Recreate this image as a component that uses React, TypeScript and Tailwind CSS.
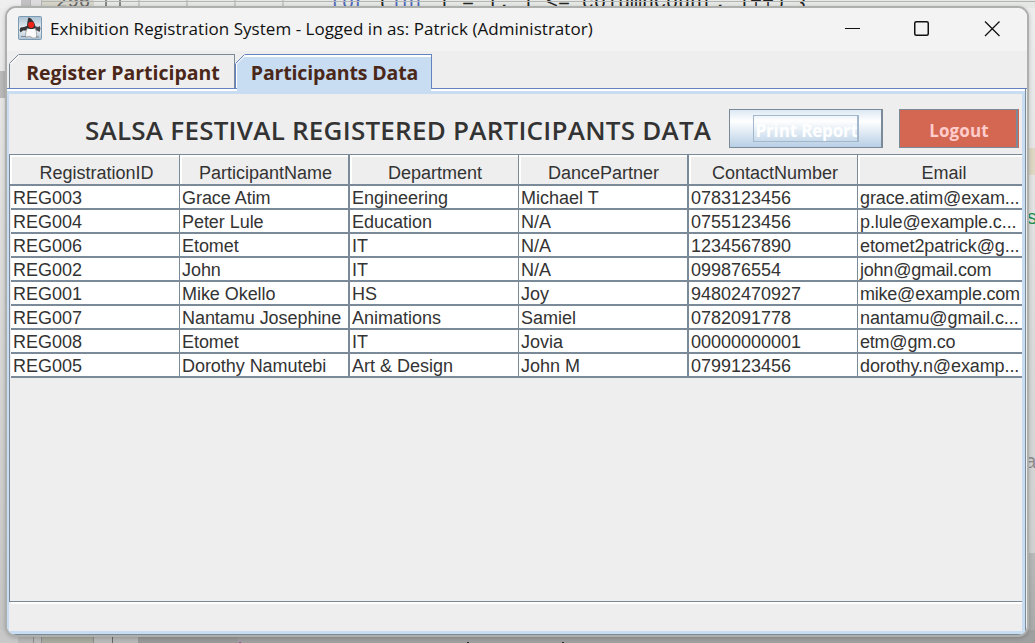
import React from "react";

const columns = [
  "RegistrationID",
  "ParticipantName",
  "Department",
  "DancePartner",
  "ContactNumber",
  "Email",
];

const cellStyles = [
  "w-[170px] border-r pl-[4px]",
  "w-[170px] border-r-2 pl-[2px] tracking-[-0.05px]",
  "w-[169px] border-r pl-[2px]",
  "w-[170px] border-r-2 pl-[2px]",
  "w-[169px] border-r pl-[2px]",
  "w-[164px] pl-[2px]",
];

const headerInsets = ["pl-[4px]", "pl-[3px]", "pl-[2px]", "pl-px", "pl-[4px]", "pl-[8px]"];

const rows = [
  ["REG003", "Grace Atim", "Engineering", "Michael T", "0783123456", "grace.atim@exam..."],
  ["REG004", "Peter Lule", "Education", "N/A", "0755123456", "p.lule@example.c..."],
  ["REG006", "Etomet", "IT", "N/A", "1234567890", "etomet2patrick@g..."],
  ["REG002", "John", "IT", "N/A", "099876554", "john@gmail.com"],
  ["REG001", "Mike Okello", "HS", "Joy", "94802470927", "mike@example.com"],
  ["REG007", "Nantamu Josephine", "Animations", "Samiel", "0782091778", "nantamu@gmail.c..."],
  ["REG008", "Etomet", "IT", "Jovia", "00000000001", "etm@gm.co"],
  ["REG005", "Dorothy Namutebi", "Art & Design", "John M", "0799123456", "dorothy.n@examp..."],
];

const emailTracking = (value: string) => (value.endsWith("...") ? "tracking-[-0.1px]" : "tracking-[-0.22px]");

function JavaIcon() {
  return (
    <svg width="24" height="24" viewBox="0 0 24 24" className="relative -top-[2px] shrink-0">
      <defs>
        <linearGradient id="duke-bg" x1="0" y1="0" x2="0" y2="1">
          <stop offset="0" stopColor="#a9bfd0" />
          <stop offset="0.55" stopColor="#eef2f6" />
          <stop offset="1" stopColor="#aec0d0" />
        </linearGradient>
      </defs>
      <rect x="0.5" y="0.5" width="23" height="23" rx="1" fill="url(#duke-bg)" stroke="#7b9ab3" />
      <path d="M10 9.500 L6 11 L2.500 11.500 L1.500 14 L2.500 16.500 L5 14.500 L10 14.500 Z" fill="#35373a" />
      <path d="M16 10 L20 11 L22 10 L22.500 13 L21.500 16 L19 14.500 L16 14 Z" fill="#45474b" />
      <path d="M9.500 12 C8 15 7 18.500 8 21.500 C10 20 11.500 20 13 21 C15 22.500 17 22.500 18.500 21 C19 17 18 14 17 12 Z" fill="#fafafa" stroke="#909090" strokeWidth="0.7" />
      <path d="M10.500 1.500 C13 2 16 5 17.500 10.500 L16.500 12.500 C13 13.500 11 13 9 12 C9 8 9.500 4 10.500 1.500 Z" fill="#303236" />
      <circle cx="13.200" cy="8.800" r="3.100" fill="#ee241b" />
      <path d="M3 20.500 H8 M18 21 H21" stroke="#798895" strokeWidth="1" />
    </svg>
  );
}

function TabCorner({ color, fill }: { color: string; fill: string }) {
  return (
    <svg width="10" height="10" viewBox="0 0 10 10" className="absolute -left-px -top-px">
      <path d="M0 0 H10 V1 L1 10 H0 Z" fill="#eeeeee" />
      <path d="M10 2 L10 10 H1 Z" fill={fill} />
      <path d="M0.500 9.500 L9.500 0.500" stroke={color} fill="none" />
      <path d="M1.500 10 L10 1.500" stroke="#ffffff" fill="none" />
    </svg>
  );
}

function Backdrop() {
  return (
    <div className="absolute inset-0 flex flex-col bg-[#a0a0a0] font-['Liberation_Mono',monospace]">
      <div className="relative flex h-[8px] shrink-0 overflow-hidden bg-[#e6e8e5]">
        <div className="w-[21px] bg-[#eeeeee]" />
        <div className="w-[9px] bg-[#c2c2c2]" />
        <div className="w-[12px] border-x border-[#b4b4b4] bg-[#dcdcdc]" />
        <div className="w-[52px] bg-[#d4d4c9] pl-[14px] text-[19px] leading-[8px] text-[#666]">
          <span className="relative -top-[2px]">296</span>
        </div>
        <div className="ml-[11px] h-[8px] w-[16px] border-2 border-t-0 border-[#888]" />
        <div className="ml-[17px] w-[2px] bg-[#c8cac7]" />
        <div className="ml-[46px] w-[2px] bg-[#c8cac7]" />
        <div className="ml-[46px] w-[2px] bg-[#c8cac7]" />
        <div className="ml-[46px] w-[2px] bg-[#c8cac7]" />
        <div className="absolute left-[330px] -top-[7px] whitespace-pre text-[20px] leading-[20px] text-[#222]">
          <span className="text-[#4d68bd]">for</span> (<span className="text-[#4d68bd]">int</span> i = 1; i &lt;= columnCount; i++) {"{"}
        </div>
        <div className="absolute left-[42px] top-[1px] h-px w-[993px] bg-[#b5b6b4]" />
      </div>
      <div className="flex min-h-0 flex-1 justify-between">
        <div className="w-[18px] bg-gradient-to-b from-[#ececec] to-[#c6c6c6] pt-[63px]">
          <div className="h-[27px] bg-[#b9b9b9]" />
        </div>
        <div className="flex w-[18px] flex-col bg-gradient-to-b from-[#ededed] via-[#dcdcdc] to-[#cdcdcd] pt-[140px] text-[20px]">
          <div className="h-[27px] shrink-0 bg-[#ded7c4]" />
          <div className="mt-[32px] h-[24px] shrink-0 pl-[9px] leading-[24px] text-[#1d914f]">s</div>
          <div className="mt-[220px] h-[24px] shrink-0 pl-[8px] leading-[24px] text-[#8d8d8d]">a</div>
          <div className="mt-[78px] flex-1 bg-gradient-to-b from-[#b9b9b9] to-[#aaaaaa]" />
        </div>
      </div>
      <div className="flex h-[13px] shrink-0 overflow-hidden bg-[#9f9f9f]">
        <div className="w-[18px] bg-[#c8c8c8]" />
        <div className="w-[15px] bg-[#b7b7b7]" />
        <div className="w-[9px] border-x border-[#8c8c8c] bg-[#b9b9b9]" />
        <div className="w-[52px] border-r border-[#8c8c8c] bg-[#a9aa9f]" />
        <div className="w-[19px] border-r border-[#666] bg-[#bababa]" />
        <div className="w-[25px] bg-[#b7b7b7]" />
        <div className="w-[100px] bg-[#999999]" />
        <div className="mt-[12px] ml-px h-px w-[2px] bg-[#a44d9b]" />
        <div className="mt-[12px] ml-[226px] h-px w-[2px] bg-[#28283c]" />
        <div className="mt-[12px] ml-[93px] h-px w-[2px] bg-[#28283c]" />
      </div>
    </div>
  );
}

function TitleBar() {
  return (
    <div className="flex h-[43px] shrink-0 items-center bg-[#f3f3f3] pl-[11px]">
      <JavaIcon />
      <div className="ml-[8px] flex-1 whitespace-nowrap pb-px font-['Open_Sans',sans-serif] text-[17px] leading-[24px] tracking-[0.04px] text-[#111]">
        <span>Exhibition Registration System - Logged in as: Patrick (Administrator)</span>
      </div>
      <svg width="182" height="43" viewBox="845 8 182 43" fill="none" stroke="#111" className="shrink-0">
        <path d="M845 28.500 H860" />
        <rect x="914.750" y="21.750" width="13.500" height="13.500" rx="1.500" strokeWidth="1.500" />
        <path d="M985 21.500 L999.500 36 M999.500 21.500 L985 36" strokeWidth="1.300" />
      </svg>
    </div>
  );
}

function Tabs() {
  return (
    <div className="flex h-[37px] shrink-0 bg-[#eeeeee] pl-[2px] pt-[3px] font-['Open_Sans',sans-serif] text-[19.500px] font-bold text-[#4a2718]">
      <div className="relative flex h-[34px] w-[226px] items-center justify-center border border-b-0 border-[#7a8a99] whitespace-nowrap">
        <TabCorner color="#7a8a99" fill="#eeeeee" />
        <span className="relative left-px top-px">Register Participant</span>
      </div>
      <div className="relative z-10 h-[37px] w-[197px]">
        <div className="relative flex h-[34px] items-center justify-center border border-b-0 border-[#6382bf] bg-[#c8ddf2] shadow-[inset_1px_2px_0_#fff] whitespace-nowrap">
          <TabCorner color="#6382bf" fill="#c8ddf2" />
          <span className="relative left-px top-px tracking-[-0.15px]">Participants Data</span>
        </div>
        <div className="ml-[2px] h-[3px] w-[194px] bg-[#c8ddf2]" />
      </div>
    </div>
  );
}

function Toolbar() {
  return (
    <div className="flex h-[60px] shrink-0 pl-[76px] pt-[15px] font-['Open_Sans',sans-serif]">
      <h1 className="w-[644px] whitespace-nowrap pt-px text-[26px] font-semibold leading-[40px] tracking-[0.24px] text-[#333]">
        SALSA FESTIVAL REGISTERED PARTICIPANTS DATA
      </h1>
      <button className="flex h-[39px] w-[154px] items-center justify-center border border-r-2 border-[#7a8a99] bg-gradient-to-b from-[#dce8f3] via-[#ffffff] via-30% to-[#b8cfe5]">
        <span className="flex h-[27px] w-[106px] items-center overflow-hidden whitespace-nowrap border border-r-2 border-[#a3b8cc] pl-[2px] pt-[4px] text-[17px] font-bold tracking-[-0.15px] text-white">
          Print Report
        </span>
      </button>
      <button className="ml-[16px] flex h-[39px] w-[120px] bg-[#d46752] pr-px">
        <span className="flex h-full w-full items-center justify-center border border-r-2 border-[#7a8a99] pl-[2px] pt-[4px] text-[17px] font-bold tracking-[0.1px] text-[#ffcccc]">
          Logout
        </span>
      </button>
    </div>
  );
}

function ParticipantsTable() {
  return (
    <div className="flex h-[448px] shrink-0 flex-col border-b border-l border-t border-[#7a8a99] font-['Liberation_Sans',Arial,sans-serif] text-[18px] text-[#333]">
      <div className="flex h-[31px] w-[1012px]">
        {columns.map((name, i) => (
          <div key={name} className={`${cellStyles[i]} shrink-0 border-[#7a8a99] !pl-0 !tracking-normal`}>
            <div
              className={`${headerInsets[i]} flex h-full items-center justify-center border-b-2 border-[#7a8a99] pt-[7px] shadow-[inset_2px_2px_0_#fff]`}
            >
              {name}
            </div>
          </div>
        ))}
      </div>
      {rows.map((row) => (
        <div key={row[0]} className="ml-px flex h-[24px] w-[1011px] shrink-0 border-b-2 border-[#7a8a99] bg-white">
          {row.map((value, i) => (
            <div
              key={columns[i]}
              className={`${cellStyles[i]} ${i === 5 ? emailTracking(value) : ""} shrink-0 overflow-hidden whitespace-nowrap border-[#7a8a99] leading-[24px] first:w-[169px] first:pl-[2px]`}
            >
              {value}
            </div>
          ))}
        </div>
      ))}
    </div>
  );
}

export default function App() {
  return (
    <div className="relative h-[643px] w-[1035px] overflow-hidden">
      <Backdrop />
      <main className="absolute left-[5px] top-[6px] flex h-[631px] w-[1024px] flex-col overflow-hidden rounded-[11px] border-2 border-[#aeb0ae] bg-[#eeeeee] shadow-[0_1px_4px_#0003]">
        <TitleBar />
        <Tabs />
        <div className="flex flex-1 flex-col border-b border-t border-b-[#7a8a99] border-t-[#6382bf]">
          <div className="mr-px flex flex-1 flex-col border-r border-[#7a8a99]">
            <div className="h-[2px] shrink-0 bg-white" />
            <div className="flex flex-1 flex-col border-b-[3px] border-l-2 border-r-[3px] border-t-[3px] border-[#c8ddf2]">
              <Toolbar />
              <ParticipantsTable />
              <div className="ml-[2px] h-[2px] bg-white" />
            </div>
          </div>
        </div>
      </main>
    </div>
  );
}
